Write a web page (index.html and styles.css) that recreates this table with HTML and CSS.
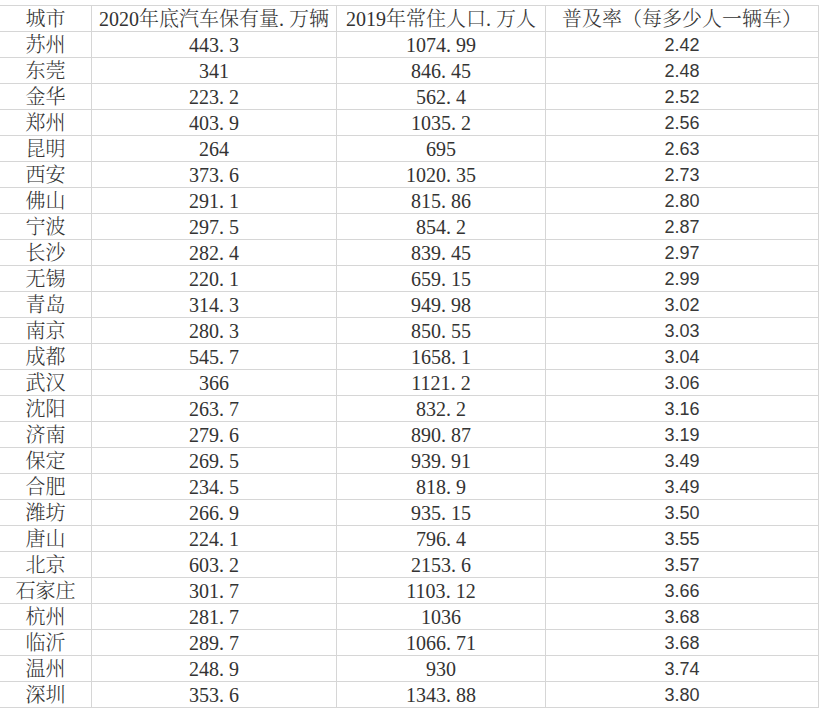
FILE: index.html
```html
<!DOCTYPE html>
<html lang="zh-CN">
<head>
<meta charset="utf-8">
<title>城市汽车普及率</title>
<link rel="stylesheet" href="styles.css">
</head>
<body>
<table class="sheet">
<colgroup><col class="c1"><col class="c2"><col class="c3"><col class="c4"></colgroup>
<thead>
<tr><th>城市</th><th>2020年底汽车保有量<span class="dot">.</span>万辆</th><th>2019年常住人口<span class="dot">.</span>万人</th><th>普及率（每多少人一辆车）</th></tr>
</thead>
<tbody>
<tr><td>苏州</td><td>443<span class="dot">.</span>3</td><td>1074<span class="dot">.</span>99</td><td class="rate">2.42</td></tr>
<tr><td>东莞</td><td>341</td><td>846<span class="dot">.</span>45</td><td class="rate">2.48</td></tr>
<tr><td>金华</td><td>223<span class="dot">.</span>2</td><td>562<span class="dot">.</span>4</td><td class="rate">2.52</td></tr>
<tr><td>郑州</td><td>403<span class="dot">.</span>9</td><td>1035<span class="dot">.</span>2</td><td class="rate">2.56</td></tr>
<tr><td>昆明</td><td>264</td><td>695</td><td class="rate">2.63</td></tr>
<tr><td>西安</td><td>373<span class="dot">.</span>6</td><td>1020<span class="dot">.</span>35</td><td class="rate">2.73</td></tr>
<tr><td>佛山</td><td>291<span class="dot">.</span>1</td><td>815<span class="dot">.</span>86</td><td class="rate">2.80</td></tr>
<tr><td>宁波</td><td>297<span class="dot">.</span>5</td><td>854<span class="dot">.</span>2</td><td class="rate">2.87</td></tr>
<tr><td>长沙</td><td>282<span class="dot">.</span>4</td><td>839<span class="dot">.</span>45</td><td class="rate">2.97</td></tr>
<tr><td>无锡</td><td>220<span class="dot">.</span>1</td><td>659<span class="dot">.</span>15</td><td class="rate">2.99</td></tr>
<tr><td>青岛</td><td>314<span class="dot">.</span>3</td><td>949<span class="dot">.</span>98</td><td class="rate">3.02</td></tr>
<tr><td>南京</td><td>280<span class="dot">.</span>3</td><td>850<span class="dot">.</span>55</td><td class="rate">3.03</td></tr>
<tr><td>成都</td><td>545<span class="dot">.</span>7</td><td>1658<span class="dot">.</span>1</td><td class="rate">3.04</td></tr>
<tr><td>武汉</td><td>366</td><td>1121<span class="dot">.</span>2</td><td class="rate">3.06</td></tr>
<tr><td>沈阳</td><td>263<span class="dot">.</span>7</td><td>832<span class="dot">.</span>2</td><td class="rate">3.16</td></tr>
<tr><td>济南</td><td>279<span class="dot">.</span>6</td><td>890<span class="dot">.</span>87</td><td class="rate">3.19</td></tr>
<tr><td>保定</td><td>269<span class="dot">.</span>5</td><td>939<span class="dot">.</span>91</td><td class="rate">3.49</td></tr>
<tr><td>合肥</td><td>234<span class="dot">.</span>5</td><td>818<span class="dot">.</span>9</td><td class="rate">3.49</td></tr>
<tr><td>潍坊</td><td>266<span class="dot">.</span>9</td><td>935<span class="dot">.</span>15</td><td class="rate">3.50</td></tr>
<tr><td>唐山</td><td>224<span class="dot">.</span>1</td><td>796<span class="dot">.</span>4</td><td class="rate">3.55</td></tr>
<tr><td>北京</td><td>603<span class="dot">.</span>2</td><td>2153<span class="dot">.</span>6</td><td class="rate">3.57</td></tr>
<tr><td>石家庄</td><td>301<span class="dot">.</span>7</td><td>1103<span class="dot">.</span>12</td><td class="rate">3.66</td></tr>
<tr><td>杭州</td><td>281<span class="dot">.</span>7</td><td>1036</td><td class="rate">3.68</td></tr>
<tr><td>临沂</td><td>289<span class="dot">.</span>7</td><td>1066<span class="dot">.</span>71</td><td class="rate">3.68</td></tr>
<tr><td>温州</td><td>248<span class="dot">.</span>9</td><td>930</td><td class="rate">3.74</td></tr>
<tr><td>深圳</td><td>353<span class="dot">.</span>6</td><td>1343<span class="dot">.</span>88</td><td class="rate">3.80</td></tr>
</tbody>
</table>
</body>
</html>
```

FILE: styles.css
```css
html, body {
  margin: 0;
  background: #ffffff;
}
body {
  padding-top: 5px;
}
.sheet {
  table-layout: fixed;
  width: 819px;
  border-collapse: separate;
  border-spacing: 0;
  font-family: "Liberation Serif", "Noto Serif CJK SC", "Noto Sans CJK SC", serif;
  font-size: 20px;
  font-weight: 300;
  color: #333333;
}
.c1 { width: 92px; }
.c2 { width: 245px; }
.c3 { width: 209px; }
.c4 { width: 273px; }
.sheet th,
.sheet td {
  box-sizing: border-box;
  height: 26px;
  padding: 2px 0 0 0;
  line-height: 23px;
  text-align: center;
  font-weight: 300;
  white-space: nowrap;
  overflow: hidden;
  border-right: 1px solid #d6d6d6;
  border-bottom: 1px solid #d6d6d6;
  vertical-align: middle;
}
.sheet thead th {
  border-top: 1px solid #d6d6d6;
  height: 27px;
}
.dot {
  display: inline-block;
  width: 0.5em;
  text-align: left;
}
.sheet td.rate {
  font-family: "Liberation Sans", Arial, sans-serif;
  font-size: 18px;
  font-weight: normal;
  color: #383838;
}
```
